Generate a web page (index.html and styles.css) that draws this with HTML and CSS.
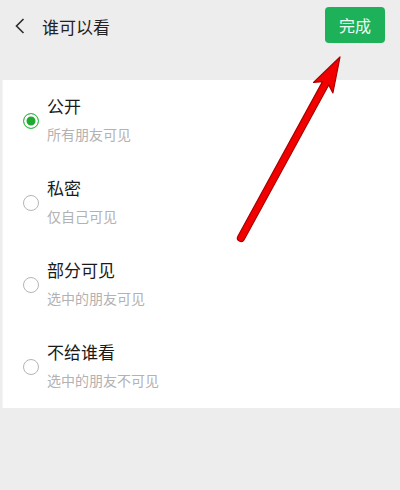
FILE: index.html
```html
<!DOCTYPE html>
<html>
  <head>
    <meta charset="UTF-8">
    <meta name="viewport" content="width=device-width,initial-scale=1">
    <link rel="stylesheet" href="styles.css">
    <title>谁可以看</title>
  </head>
  <body>
    <div id="header">
      <div class="back">
        <svg width="10" height="16" viewBox="0 0 10 16">
          <path d="M8.5 1 L1.5 8 L8.5 15" fill="none" stroke="#2b2b2b" stroke-width="1.6" stroke-linejoin="miter"/>
        </svg>
      </div>
      <span class="title">谁可以看</span>
      <a class="done" href="#">完成</a>
    </div>
    <div id="options">
      <div class="option">
        <span class="radio checked"></span>
        <div class="text">
          <div class="name">公开</div>
          <div class="desc">所有朋友可见</div>
        </div>
      </div>
      <div class="option">
        <span class="radio"></span>
        <div class="text">
          <div class="name">私密</div>
          <div class="desc">仅自己可见</div>
        </div>
      </div>
      <div class="option">
        <span class="radio"></span>
        <div class="text">
          <div class="name">部分可见</div>
          <div class="desc">选中的朋友可见</div>
        </div>
      </div>
      <div class="option">
        <span class="radio"></span>
        <div class="text">
          <div class="name">不给谁看</div>
          <div class="desc">选中的朋友不可见</div>
        </div>
      </div>
    </div>
    <svg class="arrow" width="400" height="490" viewBox="0 0 400 490">
      <path d="M340 57 L332.9 93 L328.7 85 L244.1 239.7 A3.5 3.5 0 0 1 237.9 236.3 L322.5 81.6 L313.5 82.4 Z"
        fill="#f20000" stroke="#a80000" stroke-width="1.2" stroke-linejoin="round"/>
    </svg>
  </body>
</html>
```

FILE: styles.css
```css
body {
  margin: 0;
  padding: 0;
  background-color: #ededed;
  font-family: "Noto Sans CJK SC", "Noto Sans", sans-serif;
  color: #1a1a1a;
  height: 490px;
  overflow: hidden;
}

#header {
  height: 50px;
  display: flex;
  align-items: center;
  margin-bottom: 30px;
}

.back {
  width: 10px;
  height: 16px;
  margin-left: 15px;
  margin-top: 2px;
}

.back svg {
  display: block;
}

.title {
  margin-left: 17px;
  font-size: 17px;
  line-height: 24px;
  margin-top: 4px;
  color: #222;
}

.done {
  margin-left: auto;
  margin-right: 15px;
  width: 60px;
  height: 36px;
  margin-top: 0;
  border-radius: 4px;
  background-color: #1db25a;
  color: #eefaf2;
  font-size: 16px;
  line-height: 36px;
  text-align: center;
  text-decoration: none;
}

#options {
  background-color: #fff;
  margin-left: 2px;
  border-left: 1px solid #f4f4f6;
}

.option {
  height: 82px;
  display: flex;
  align-items: center;
}

.radio {
  box-sizing: border-box;
  width: 16px;
  height: 16px;
  border-radius: 50%;
  border: 1.5px solid #b5b5b5;
  margin-left: 20px;
  flex-shrink: 0;
}

.radio.checked {
  border-color: #3cbf4c;
  background-color: #1fa832;
  box-shadow: inset 0 0 0 2.5px #fff;
}

.text {
  margin-left: 8px;
  margin-bottom: 5px;
}

.name {
  font-size: 17px;
  line-height: 24px;
  color: #1a1a1a;
}

.desc {
  margin-top: 6px;
  font-size: 14px;
  line-height: 20px;
  color: #b2b2b2;
}

.arrow {
  position: absolute;
  left: 0;
  top: 0;
  pointer-events: none;
}
```
